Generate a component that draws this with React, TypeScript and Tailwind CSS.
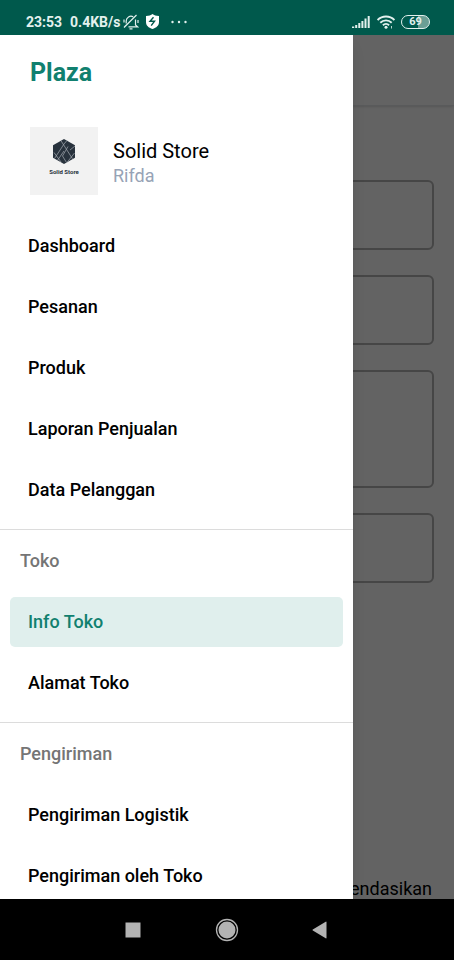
import React, { useState } from 'react';
import clsx from 'clsx';

interface MenuSection {
  title?: string;
  items: string[];
}

const sections: MenuSection[] = [
  { items: ['Dashboard', 'Pesanan', 'Produk', 'Laporan Penjualan', 'Data Pelanggan'] },
  { title: 'Toko', items: ['Info Toko', 'Alamat Toko'] },
  { title: 'Pengiriman', items: ['Pengiriman Logistik', 'Pengiriman oleh Toko'] },
];

const StatusBar = () => (
  <header className="flex h-[35px] shrink-0 items-center justify-between bg-[#00594c] pt-2 pr-6 pl-[26px] text-[#e3f1ee]">
    <div className="flex items-center">
      <span className="text-[14px] leading-5 font-bold">23:53</span>
      <span className="ml-2 text-[14px] leading-5 font-bold">0.4KB/s</span>
      {/* muted bell */}
      <svg className="ml-[3px] h-4 w-4" viewBox="0 0 16 16" fill="none" stroke="currentColor" strokeWidth="1.2" aria-hidden="true">
        <path d="M3.200 9.500V7a4.800 4.800 0 0 1 7-4.200M12.500 5.500V11l2 1.800H5.500M1 13.500L13.500 1M1 5.500v3M15 6v3M6.500 14.800h3M1.500 12.800l1.700-1.500" />
      </svg>
      <svg className="ml-[7px] h-[15px] w-[13px]" viewBox="0 0 13 15" aria-hidden="true">
        <path d="M6.500 0C8 1.300 10 2 13 2v6c0 3.500-2.500 5.700-6.500 7C2.500 13.700 0 11.500 0 8V2c3 0 5-.7 6.500-2z" fill="#fff" />
        <path d="M7.500 3.200L4 7.300h4.500L5.200 11.600" fill="none" stroke="#00594c" strokeWidth="1.400" />
      </svg>
      <svg className="ml-3 h-1 w-4" viewBox="0 0 16 4" fill="currentColor" aria-hidden="true">
        <circle cx="1.500" cy="2" r="1.200" />
        <circle cx="8" cy="2" r="1.200" />
        <circle cx="14.500" cy="2" r="1.200" />
      </svg>
    </div>
    <div className="flex items-center">
      <svg className="h-3 w-[18px]" viewBox="0 0 18 12" fill="currentColor" aria-hidden="true">
        <path d="M0 10.500h2.200V12H0zM3.200 9h2v3h-2zM6.300 7h2v5h-2zM9.400 5h2v7h-2zM12.500 2.500h2V12h-2zM15.700 0h2v12h-2z" />
      </svg>
      <svg className="ml-[7px] h-[14px] w-[18px]" viewBox="0 0 18 14" fill="none" stroke="currentColor" strokeWidth="1.900" aria-hidden="true">
        <path d="M.6 5a12 12 0 0 1 16.800 0M3.300 7.700a8.200 8.200 0 0 1 11.400 0M5.900 10.300a4.500 4.500 0 0 1 6.200 0" />
        <circle cx="9" cy="12.300" r="1.500" fill="currentColor" stroke="none" />
        <path d="M14.500 11v2.500" strokeWidth="0.800" />
      </svg>
      <span className="ml-1.5 flex h-[14px] w-[29px] items-center justify-center rounded-full border border-current bg-linear-to-r from-transparent from-60% to-[#6b9f95] to-60% text-[11px] leading-3 font-bold">
        69
      </span>
    </div>
  </header>
);

const StoreLogo = () => (
  <div className="flex h-[68px] w-[68px] shrink-0 flex-col items-center bg-[#f2f2f2] pt-3">
    <svg className="h-[25px] w-[22px]" viewBox="0 0 22 25" aria-hidden="true">
      <path d="M11 0l11 6.300v12.400L11 25 0 18.700V6.300z" fill="#28323d" />
      <path
        d="M11 5L1.500 19.500M8 1.800l11.500 18M1 13.500l7 9.500M11 12l-6.500 9.300M15 7.500L9.500 17l4 6.500M21.500 14L14 23.500M11 5l3-3.500M17 11l5-4"
        fill="none"
        stroke="#a5abb1"
        strokeWidth="0.700"
      />
    </svg>
    <span className="mt-1 text-[6px] leading-2 font-bold text-[#28323d]">Solid Store</span>
  </div>
);

const StoreForm = () => (
  <div className="flex flex-1 flex-col bg-white">
    <div className="h-[71px] border-b border-gray-200 shadow-sm"></div>
    <form className="mt-[74px] flex flex-col gap-[25px] px-5">
      <input aria-label="Nama toko" className="h-[70px] rounded-md border-2 border-[#b4b4b4]" />
      <input aria-label="Slogan" className="h-[70px] rounded-md border-2 border-[#b4b4b4]" />
      <textarea aria-label="Deskripsi" className="h-[118px] resize-none rounded-md border-2 border-[#b4b4b4]" />
      <input aria-label="Kategori" className="h-[70px] rounded-md border-2 border-[#b4b4b4]" />
    </form>
    <p className="mt-auto pr-[22px] text-right text-[18px] leading-5 text-black">endasikan</p>
  </div>
);

const Drawer = () => {
  const [active, setActive] = useState('Info Toko');

  return (
    <aside className="absolute inset-y-0 left-0 w-[353px] overflow-hidden bg-white shadow-lg">
      <h1 className="px-[30px] pt-[22px] text-[25px] leading-8 font-bold text-[#11806f]">Plaza</h1>
      <div className="mt-[38px] flex items-center gap-[15px] px-[30px]">
        <StoreLogo />
        <div className="pt-1">
          <p className="text-[20px] leading-[26px] text-black">Solid Store</p>
          <p className="text-[18px] leading-6 text-[#97a3b6]">Rifda</p>
        </div>
      </div>
      <nav className="mt-[26px] flex flex-col gap-[14px]">
        {sections.map((section) => (
          <section key={section.items[0]} className={clsx(section.title && 'border-t border-[#dcdcdc] pt-[19px]')}>
            {section.title && (
              <h2 className="mb-6 px-5 text-[18px] leading-6 font-medium text-[#757575]">{section.title}</h2>
            )}
            <ul className="flex flex-col gap-[11px] px-[10px]">
              {section.items.map((item) => (
                <li key={item}>
                  <button
                    type="button"
                    onClick={() => setActive(item)}
                    className={clsx(
                      'h-[50px] w-full rounded-[5px] px-[18px] text-left text-[18px] leading-6 font-medium',
                      active === item ? 'bg-[#e0efed] text-[#11806f]' : 'text-black'
                    )}
                  >
                    {item}
                  </button>
                </li>
              ))}
            </ul>
          </section>
        ))}
      </nav>
    </aside>
  );
};

const NavigationBar = () => (
  <footer className="flex h-[61px] shrink-0 items-center justify-center gap-[70px] bg-black text-[#b3b3b3]">
    <button type="button" aria-label="Recent apps">
      <svg className="h-6 w-6" viewBox="0 0 24 24" fill="currentColor">
        <path d="M4.500 4.500h15v15h-15z" />
      </svg>
    </button>
    <button type="button" aria-label="Home">
      <svg className="h-6 w-6" viewBox="0 0 24 24" fill="currentColor">
        <circle cx="12" cy="12" r="10.500" fill="none" stroke="currentColor" strokeWidth="1.300" />
        <circle cx="12" cy="12" r="8.500" />
      </svg>
    </button>
    <button type="button" aria-label="Back">
      <svg className="h-6 w-6" viewBox="0 0 24 24" fill="currentColor">
        <path d="M17.500 4v16a.5.5 0 0 1-.8.300L3.800 12.500a.6.600 0 0 1 0-1l12.900-7.800a.5.500 0 0 1 .8.300z" />
      </svg>
    </button>
  </footer>
);

const App = () => (
  <div className="flex min-h-screen flex-col font-['Roboto',sans-serif]">
    <StatusBar />
    <main className="relative flex flex-1 flex-col overflow-hidden">
      <StoreForm />
      <div className="absolute inset-0 bg-black/61"></div>
      <Drawer />
    </main>
    <NavigationBar />
  </div>
);

export default App;
